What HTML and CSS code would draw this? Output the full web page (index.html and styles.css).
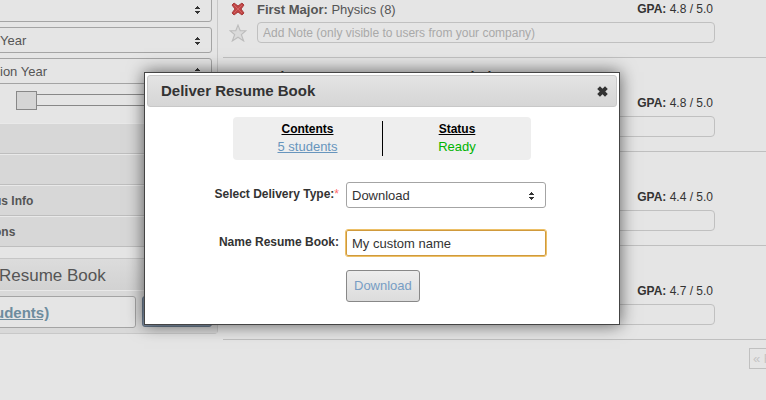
FILE: index.html
```html
<!DOCTYPE html>
<html lang="en">
<head>
<meta charset="utf-8">
<title>Deliver Resume Book</title>
<link rel="stylesheet" href="styles.css">
</head>
<body>
<svg class="defs" aria-hidden="true">
  <symbol id="arrows" viewBox="0 0 6 8"><path d="M2 0h1v1h1v1h1v1H0V2h1V1h1V0zM0 5h5v1H4v1H3v1H2V7H1V6H0z"/></symbol>
</svg>
<div class="page">
  <aside class="sidebar">
    <div class="filters">
      <div class="picker"><select aria-label="Filter"><option></option></select><svg class="arrows"><use href="#arrows"/></svg></div>
      <div class="picker"><select aria-label="Year"><option>Year</option></select><svg class="arrows"><use href="#arrows"/></svg></div>
      <div class="picker"><select aria-label="Year range"><option>ion Year</option></select><svg class="arrows"><use href="#arrows"/></svg></div>
      <input class="slider" type="range" min="0" max="5" value="0" aria-label="GPA">
    </div>
    <ul class="sections">
      <li></li>
      <li></li>
      <li>us Info</li>
      <li>ons</li>
    </ul>
    <section class="book">
      <h2>Resume Book</h2>
      <div class="book-actions">
        <a class="book-link" href="#">udents)</a>
        <button class="deliver" type="button" aria-label="Deliver"></button>
      </div>
    </section>
  </aside>
  <main class="results">
    <article class="student first">
      <div class="row">
        <button class="icon" type="button" aria-label="Remove">
          <svg viewBox="0 0 14 14"><path d="M1 3l2-2 4 3 4-3 2 2-3 4 3 4-2 2-4-3-4 3-2-2 3-4z" fill="#c14444" stroke="#a83c3c"/><path d="M3 3l8 8M11 3l-8 8" stroke="#d06262"/></svg>
        </button>
        <span class="major"><b>First Major:</b> Physics (8)</span>
        <span class="gpa"><b>GPA:</b> 4.8 / 5.0</span>
      </div>
      <div class="row">
        <button class="icon star" type="button" aria-label="Star">
          <svg viewBox="0 0 16 16"><path d="M8 1l2 5h5l-4 3.500 2 5.500-5-3.300L3 15l2-5.500L1 6h5z" fill="#dadada" stroke="#bcbcbc"/></svg>
        </button>
        <input class="note" type="text" placeholder="Add Note (only visible to users from your company)" aria-label="Note">
      </div>
    </article>
    <article class="student">
      <h3>Andrew S. Larson, '15 S.B. Psychology</h3>
      <div class="row"><span class="major"></span><span class="gpa"><b>GPA:</b> 4.8 / 5.0</span></div>
      <div class="row"><input class="note" type="text" aria-label="Note"></div>
    </article>
    <article class="student">
      <div class="row"><span class="major"></span><span class="gpa"><b>GPA:</b> 4.4 / 5.0</span></div>
      <div class="row"><input class="note" type="text" aria-label="Note"></div>
    </article>
    <article class="student">
      <div class="row"><span class="major"></span><span class="gpa"><b>GPA:</b> 4.7 / 5.0</span></div>
      <div class="row"><input class="note" type="text" aria-label="Note"></div>
    </article>
    <nav class="pager"><span>« First</span></nav>
  </main>
</div>
<div class="dialog" role="dialog" aria-labelledby="dialog-title">
  <header class="titlebar">
    <h1 id="dialog-title">Deliver Resume Book</h1>
    <button class="close" type="button" aria-label="Close"><svg viewBox="0 0 10 10"><path d="M2 2l6 6M8 2L2 8" stroke="#333" stroke-width="3"/></svg></button>
  </header>
  <dl class="summary">
    <div><dt>Contents</dt><dd><a href="#">5 students</a></dd></div>
    <div><dt>Status</dt><dd class="ready">Ready</dd></div>
  </dl>
  <form class="form">
    <label for="type">Select Delivery Type:<span class="required">*</span></label>
    <div class="picker"><select id="type"><option>Download</option></select><svg class="arrows"><use href="#arrows"/></svg></div>
    <label for="name">Name Resume Book:</label>
    <input class="name" id="name" type="text" value="My custom name">
    <button class="download" type="button">Download</button>
  </form>
</div>
</body>
</html>
```
FILE: styles.css
```css
* { box-sizing: border-box; }
body {
  margin: 0;
  min-height: 100vh;
  overflow: hidden;
  background: #e5e5e5;
  color: #333;
  font: 13px/16px "Liberation Sans", Arial, sans-serif;
}
h1, h2, h3, ul, dl, dd { margin: 0; padding: 0; }
button, input, select { font: inherit; color: inherit; margin: 0; }
.defs { display: none; }
.page { display: flex; }

/* sidebar */
.sidebar {
  flex: 0 0 224px;
  align-self: flex-start;
  margin: -4px 5px 0 -6px;
  border-right: 1px solid #c8c8c8;
  border-bottom: 1px solid #c8c8c8;
  border-radius: 0 0 4px 0;
  color: #555;
}
.filters { display: grid; gap: 5px; padding-right: 5px; height: 127px; align-content: start; }
.picker { display: grid; align-items: center; }
.picker > * { grid-area: 1 / 1; }
.picker select {
  appearance: none;
  width: 100%;
  height: 26px;
  padding: 2px 5px 0;
  border: 1px solid #a4a4a4;
  border-radius: 3px;
  background: transparent;
}
.arrows { width: 6px; height: 8px; margin: 2px 11px 0 0; justify-self: end; fill: #333; pointer-events: none; }
.slider {
  appearance: none;
  height: 22px;
  margin: 0 0 0 22px;
  background: linear-gradient(#888, #888) 0 5px / 100% 1px no-repeat, linear-gradient(#888, #888) 0 16px / 100% 1px no-repeat;
}
.slider::-webkit-slider-thumb {
  appearance: none;
  width: 21px;
  height: 19px;
  border: 1px solid #888;
  background: #d5d5d5;
}
.sections { list-style: none; font-weight: bold; font-size: 12px; margin-bottom: 11px; }
.sections li { height: 31px; line-height: 31px; background: #d7d7d7; border-bottom: 1px solid #bebebe; border-top: 1px solid #e9e9e9; }
.book { background: #d9d9d9; }
.book h2 {
  height: 33px;
  padding-left: 5px;
  border-top: 1px solid #c6c6c6;
  border-bottom: 1px solid #e9e9e9;
  background: linear-gradient(#dcdcdc, #d2d2d2);
  font-size: 17px;
  font-weight: normal;
  line-height: 33px;
}
.book-actions { display: flex; gap: 6px; padding: 5px; padding-left: 0; }
.book-link {
  flex: 1;
  height: 32px;
  border: 1px solid #a4a4a4;
  border-radius: 3px;
  background: #e5e5e5;
  color: #6d8c9e;
  font-size: 15px;
  font-weight: bold;
  line-height: 32px;
}
.deliver { width: 70px; height: 31px; border: 1px solid #6a7b8e; border-radius: 3px; background: #8495aa; }

/* results */
.results { flex: 1; min-width: 0; }
.student {
  display: flex;
  flex-direction: column;
  justify-content: flex-end;
  gap: 4px;
  height: 94px;
  padding: 0 51px 14px 34px;
  border-bottom: 1px solid #bfbfbf;
}
.student h3 { font-size: 14px; line-height: 16px; margin-bottom: 5px; }
.student.first { height: 58px; padding-left: 6px; color: #555; }
.row { display: flex; align-items: center; gap: 10px; }
.major { flex: 1; height: 18px; line-height: 20px; }
.gpa { color: #333; font-size: 12px; margin-right: 2px; }
.icon { display: flex; width: 18px; height: 18px; padding: 2px; border: 0; background: none; }
.icon svg { width: 14px; height: 14px; fill: none; }
.icon.star { padding: 0; }
.icon.star svg { width: 18px; height: 18px; }
.note { flex: 1; min-width: 0; height: 21px; padding: 0 5px; border: 1px solid #c0c0c0; border-radius: 4px; background: transparent; font-size: 12px; }
.note::placeholder { color: #a9a9a9; }
.pager { display: flex; justify-content: flex-end; margin-top: 8px; margin-right: -32px; }
.pager span { width: 49px; height: 21px; padding: 0 3px; border: 1px solid #c0c0c0; color: #c4c4c4; line-height: 20px; white-space: nowrap; }

/* dialog */
.dialog {
  position: absolute;
  top: 72px;
  left: 144px;
  width: 476px;
  padding: 2px;
  border: 1px solid #444;
  background: #fff;
  box-shadow: 0 0 16px rgba(0, 0, 0, .6);
}
.titlebar {
  display: flex;
  align-items: center;
  justify-content: space-between;
  height: 32px;
  padding: 0 7px 0 13px;
  border: 1px solid #c8c8c8;
  border-radius: 3px;
  background: linear-gradient(#e4e4e4, #dcdcdc 50%, #d6d6d6);
}
.titlebar h1 { font-size: 15px; line-height: 30px; }
.close { display: flex; width: 13px; height: 13px; padding: 0; border: 0; background: none; }
.close svg { width: 13px; height: 13px; }
.summary {
  display: grid;
  grid-template-columns: 1fr 1fr;
  width: 298px;
  margin: 10px auto 22px 86px;
  padding: 4px 0;
  border-radius: 4px;
  background: #eee;
  text-align: center;
}
.summary div { padding-bottom: 1px; line-height: 17px; }
.summary div + div { border-left: 1px solid #000; }
dt { color: #000; font-size: 12px; font-weight: bold; text-decoration: underline; }
.summary a { color: #6795bd; }
.ready { color: #00b400; }
.form {
  display: grid;
  grid-template-columns: 192px 200px;
  gap: 22px 7px;
  padding-bottom: 20px;
}
.form label { font-size: 12px; font-weight: bold; line-height: 24px; text-align: right; white-space: nowrap; }
.required { color: #ff6b6b; font-weight: normal; }
.name { height: 26px; padding: 1px 5px 0; border: 1px solid #d09a3c; border-radius: 2px; outline: 1px solid #edc067; }
.download {
  grid-column: 2;
  justify-self: start;
  height: 32px;
  margin-top: -8px;
  padding: 0 7px;
  border: 1px solid #888;
  border-radius: 3px;
  background: linear-gradient(#ededed, #dcdcdc);
  color: #779dc4;
}
```
